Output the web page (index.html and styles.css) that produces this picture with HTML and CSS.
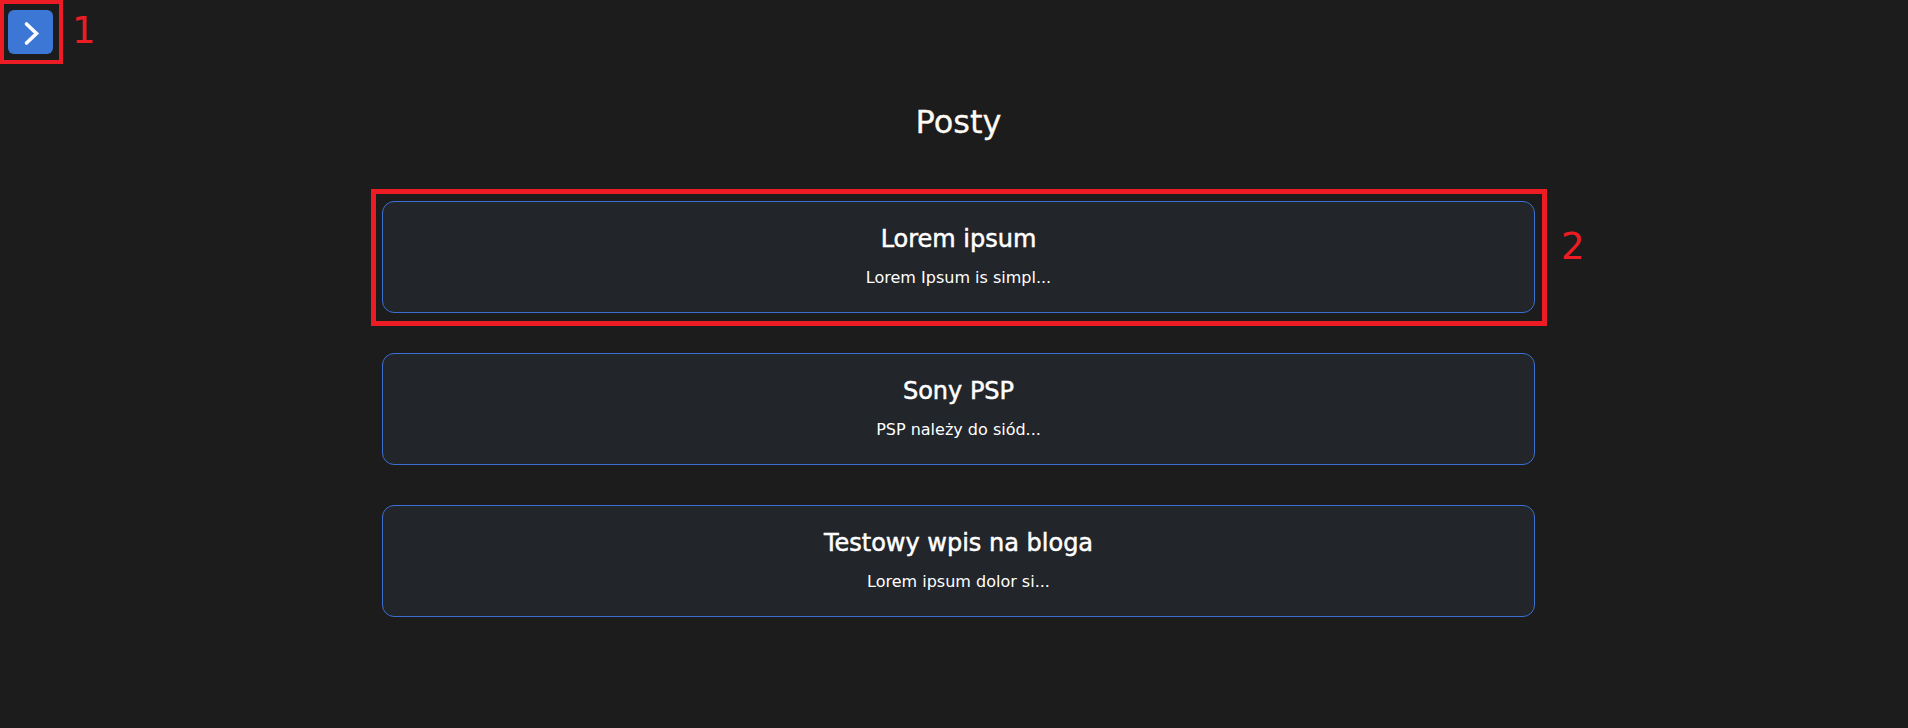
FILE: index.html
```html
<!DOCTYPE html>
<html lang="pl">
<head>
<meta charset="utf-8">
<title>Posty</title>
<link rel="stylesheet" href="styles.css">
</head>
<body>
  <button class="toggle" aria-label="Otwórz menu">
    <svg width="45" height="44" viewBox="0 0 45 44"><polyline points="18.5,14 28.5,23.5 18.5,33" fill="none" stroke="#ffffff" stroke-width="3.6" stroke-linecap="round" stroke-linejoin="miter"/></svg>
  </button>
  <div class="mark mark-1"><span class="mark-num">1</span></div>

  <main class="posts">
    <h1 class="posts-title">Posty</h1>
    <ul class="post-list">
      <li class="post-card">
        <h2 class="post-name">Lorem ipsum</h2>
        <p class="post-excerpt">Lorem Ipsum is simpl...</p>
        <div class="mark mark-2"><span class="mark-num">2</span></div>
      </li>
      <li class="post-card">
        <h2 class="post-name">Sony PSP</h2>
        <p class="post-excerpt">PSP należy do siód...</p>
      </li>
      <li class="post-card">
        <h2 class="post-name">Testowy wpis na bloga</h2>
        <p class="post-excerpt">Lorem ipsum dolor si...</p>
      </li>
    </ul>
  </main>
</body>
</html>
```

FILE: styles.css
```css
html, body {
  margin: 0;
  padding: 0;
}

body {
  background: #1c1c1c;
  color: #ffffff;
  font-family: "DejaVu Sans", "Noto Sans", sans-serif;
  width: 1908px;
  height: 728px;
  overflow: hidden;
  position: relative;
}

.toggle {
  position: absolute;
  left: 8px;
  top: 10px;
  width: 45px;
  height: 44px;
  padding: 0;
  border: none;
  border-radius: 6px;
  background: #3d77d6;
  display: flex;
  align-items: center;
  justify-content: center;
  cursor: pointer;
}

.toggle svg {
  display: block;
}

.mark {
  position: absolute;
  border: 4px solid #ed1c24;
  box-sizing: border-box;
  pointer-events: none;
}

.mark-num {
  position: absolute;
  color: #ed1c24;
  font-family: "DejaVu Sans", "Noto Sans", sans-serif;
  font-size: 37px;
  line-height: 38px;
}

.mark-1 {
  left: 0;
  top: 0;
  width: 63px;
  height: 64px;
}

.mark-1 .mark-num {
  left: 68px;
  top: 8px;
}

.mark-2 {
  left: -12px;
  top: -13px;
  right: -13px;
  bottom: -14px;
  border-width: 5px;
}

.mark-2 .mark-num {
  left: 1185px;
  top: 34px;
}

.posts {
  width: 1153px;
  margin-left: 382px;
  padding-top: 102px;
}

.posts-title {
  margin: 0 0 59px;
  text-align: center;
  font-size: 32px;
  line-height: 40px;
  font-weight: normal;
  color: #fdfaf3;
  -webkit-text-stroke: 0.3px #fdfaf3;
}

.post-list {
  list-style: none;
  margin: 0;
  padding: 0;
  display: flex;
  flex-direction: column;
  gap: 40px;
}

.post-card {
  position: relative;
  box-sizing: border-box;
  height: 112px;
  padding: 22px 16px 0;
  background: #22252a;
  border: 1px solid #3b6fd2;
  border-radius: 12px;
  text-align: center;
}

.post-name {
  margin: 0;
  font-size: 24px;
  line-height: 30px;
  font-weight: normal;
  -webkit-text-stroke: 0.5px #ffffff;
}

.post-excerpt {
  margin: 14px 0 0;
  font-size: 16px;
  line-height: 20px;
}
```
